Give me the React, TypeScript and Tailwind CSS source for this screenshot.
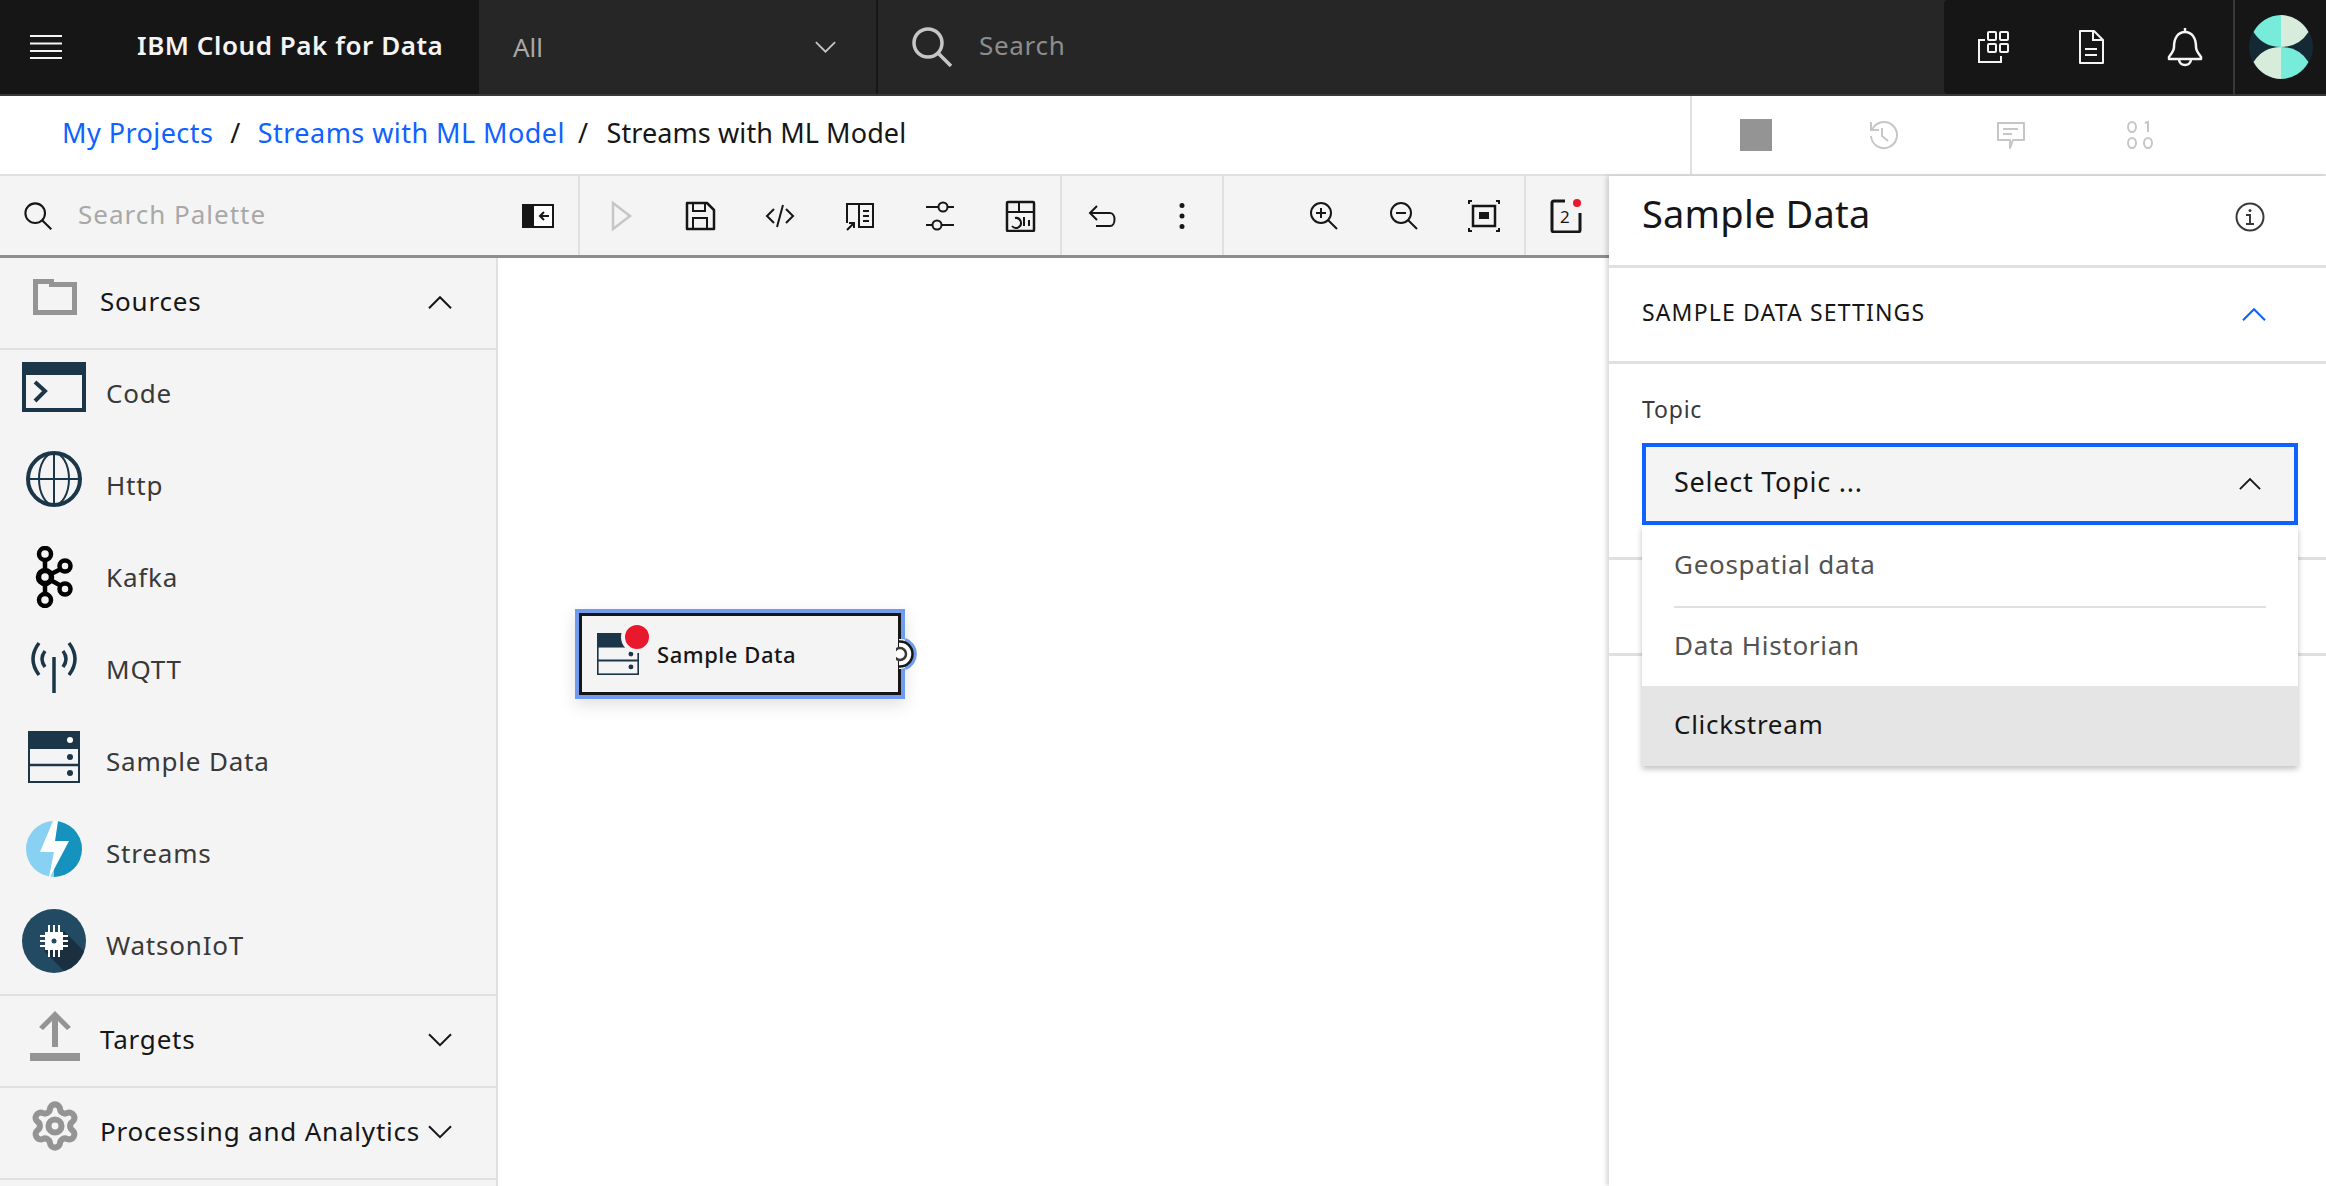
import { ReactNode } from "react";
import { Settings } from "lucide-react";

const navy = "#1c3649";

function Chevron({ up, color = "#161616", w = 24 }: { up?: boolean; color?: string; w?: number }) {
  return (
    <svg width={w} height={w * 0.6} viewBox="0 0 24 14" fill="none" stroke={color} strokeWidth="2">
      <path d={up ? "M1 13L12 2l11 11" : "M1 1l11 11L23 1"} />
    </svg>
  );
}

// header icons
function Hamburger() {
  return (
    <svg width="32" height="24" viewBox="0 0 32 24" fill="#f4f4f4">
      <rect y="0" width="32" height="2" />
      <rect y="7.5" width="32" height="2" />
      <rect y="15" width="32" height="2" />
      <rect y="22" width="32" height="2" />
    </svg>
  );
}

function Magnifier({ size, color, sw }: { size: number; color: string; sw: number }) {
  return (
    <svg width={size} height={size} viewBox="0 0 40 40" fill="none" stroke={color} strokeWidth={sw}>
      <circle cx="16" cy="16" r="14" />
      <path d="M26 26l13 13" />
    </svg>
  );
}

function AppsIcon() {
  return (
    <svg width="34" height="34" viewBox="0 0 34 34" fill="none" stroke="#f4f4f4" strokeWidth="2">
      <rect x="11" y="2" width="8" height="8" rx="1" />
      <rect x="23" y="2" width="8" height="8" rx="1" />
      <rect x="11" y="14" width="8" height="8" rx="1" />
      <rect x="23" y="14" width="8" height="8" rx="1" />
      <path d="M8 10H2v22h22v-6" />
    </svg>
  );
}

function DocIcon() {
  return (
    <svg width="26" height="34" viewBox="0 0 26 34" fill="none" stroke="#f4f4f4" strokeWidth="2">
      <path d="M2 1h14l9 9v23H2z" strokeLinejoin="round" />
      <path d="M15 1v9h10M7 19h12M7 25h12" />
    </svg>
  );
}

function BellIcon() {
  return (
    <svg width="36" height="40" viewBox="0 0 36 40" fill="none" stroke="#f4f4f4" strokeWidth="2.5">
      <path d="M18 1v4M7 20c0-9 4-15 11-15s11 6 11 15c0 4 3 7 5 10v2H2v-2c2-3 5-6 5-10z" strokeLinejoin="round" />
      <path d="M12 32c0 8 12 8 12 0" />
    </svg>
  );
}

function Avatar() {
  return (
    <svg width="64" height="64" viewBox="0 0 64 64">
      <circle cx="32" cy="32" r="32" fill="#152935" />
      <path d="M4.5 17A32 32 0 0 1 32 0v32Q14 32 4.5 17z" fill="#77ecda" />
      <path d="M59.5 17A32 32 0 0 0 32 0v32Q50 32 59.5 17z" fill="#d8ecdb" />
      <path d="M4.5 47A32 32 0 0 0 32 64V32Q14 32 4.5 47z" fill="#d8ecdb" />
      <path d="M59.5 47A32 32 0 0 1 32 64V32Q50 32 59.5 47z" fill="#77ecda" />
    </svg>
  );
}

// breadcrumb action icons
function HistoryIcon() {
  return (
    <svg width="30" height="30" viewBox="0 0 30 30" fill="none" stroke="#c6c6c6" strokeWidth="2">
      <path d="M3 2v8h8M4 10a13 13 0 1 1-1 6" />
      <path d="M14 8v8l6 5" />
    </svg>
  );
}

function CommentIcon() {
  return (
    <svg width="30" height="30" viewBox="0 0 30 30" fill="none" stroke="#c6c6c6" strokeWidth="2">
      <path d="M2 3h26v17H17l-3 8v-8H2z" strokeLinejoin="round" />
      <path d="M7 9h15M7 14h9" />
    </svg>
  );
}

function BinaryIcon() {
  return (
    <svg width="28" height="30" viewBox="0 0 28 30" fill="none" stroke="#c6c6c6" strokeWidth="2">
      <ellipse cx="6" cy="7" rx="4" ry="5" />
      <path d="M19 3l3-1v10" />
      <ellipse cx="6" cy="23" rx="4" ry="5" />
      <ellipse cx="22" cy="23" rx="4" ry="5" />
    </svg>
  );
}

// toolbar icons
function PaletteToggle() {
  return (
    <svg width="32" height="24" viewBox="0 0 32 24">
      <rect x="1" y="1" width="30" height="22" fill="#fff" stroke="#161616" strokeWidth="2" />
      <rect width="12" height="24" fill="#161616" />
      <path d="M27 12h-9M22 8l-4 4 4 4" fill="none" stroke="#161616" strokeWidth="2" />
    </svg>
  );
}

function ToolIcon({ children }: { children: ReactNode }) {
  return (
    <svg width="32" height="32" viewBox="0 0 32 32" fill="none" stroke="#161616" strokeWidth="2">
      {children}
    </svg>
  );
}

function IconButton({ children }: { children: ReactNode }) {
  return <div className="w-[80px] h-full flex items-center justify-center">{children}</div>;
}

function Divider() {
  return <div className="w-[2px] h-full bg-[#e0e0e0]" />;
}

// palette icons
function FolderIcon() {
  return (
    <svg width="44" height="36" viewBox="0 0 44 36" fill="none" stroke="#949494" strokeWidth="5">
      <path d="M2.500 33.500V2.500h16v3h23v28z" />
    </svg>
  );
}

function CodeNodeIcon() {
  return (
    <svg width="64" height="50" viewBox="0 0 64 50" fill="none">
      <rect x="2" y="2" width="60" height="46" stroke={navy} strokeWidth="4" />
      <rect width="64" height="13" fill={navy} />
      <path d="M13 20l10 9-10 10" stroke={navy} strokeWidth="4" />
    </svg>
  );
}

function GlobeIcon() {
  return (
    <svg width="56" height="56" viewBox="0 0 56 56" fill="none" stroke={navy}>
      <circle cx="28" cy="28" r="26" strokeWidth="4" />
      <ellipse cx="28" cy="28" rx="15" ry="26" strokeWidth="2" />
      <path d="M28 2v52M2 28h52" strokeWidth="2" />
    </svg>
  );
}

function KafkaIcon() {
  return (
    <svg width="40" height="62" viewBox="0 0 40 62" fill="none" stroke="#000" strokeWidth="4.500">
      <path d="M11 14v34M11 31l20-10M11 31l20 11" />
      <circle cx="11" cy="8" r="6" fill="#f4f4f4" />
      <circle cx="31" cy="20" r="5.500" fill="#f4f4f4" />
      <circle cx="31" cy="43" r="5.500" fill="#f4f4f4" />
      <circle cx="11" cy="54" r="6" fill="#f4f4f4" />
      <circle cx="11" cy="31" r="6.500" fill="#f4f4f4" strokeWidth="5.500" />
    </svg>
  );
}

function MqttIcon() {
  return (
    <svg width="48" height="52" viewBox="0 0 48 52" fill="none" stroke={navy} strokeWidth="3.500">
      <path d="M9 2Q-3 18 9 34M39 2Q51 18 39 34" />
      <path d="M15 10Q9 18 15 26M33 10Q39 18 33 26" />
      <path d="M24 16v36" />
    </svg>
  );
}

function SampleIcon({ size = 52 }: { size?: number }) {
  return (
    <svg width={size} height={size} viewBox="0 0 52 52" fill="none">
      <rect x="1" y="1" width="50" height="50" stroke={navy} strokeWidth="2" />
      <rect width="52" height="18" fill={navy} />
      <path d="M0 34h52" stroke={navy} strokeWidth="2.500" />
      <circle cx="42" cy="9" r="3" fill="#fff" />
      <circle cx="42" cy="26" r="3" fill={navy} />
      <circle cx="42" cy="42" r="3" fill={navy} />
    </svg>
  );
}

function StreamsIcon() {
  return (
    <svg width="56" height="56" viewBox="0 0 56 56">
      <path d="M28 0a28 28 0 0 1 0 56z" fill="#1592bd" />
      <path d="M28 0a28 28 0 0 0 0 56z" fill="#89d1f3" />
      <path d="M27 0h5L29 20h14L24 56h-1L28 31H14z" fill="#fff" />
    </svg>
  );
}

function WatsonIcon() {
  return (
    <svg width="64" height="64" viewBox="0 0 64 64">
      <circle cx="32" cy="32" r="32" fill="#224a62" />
      <path d="M42 22L62 42A32 32 0 0 1 42 62L22 42z" fill="#1a3040" />
      <g stroke="#fff" strokeWidth="2">
        <path d="M27 16v32M32 16v32M37 16v32M18 27h28M18 32h28M18 37h28" />
      </g>
      <rect x="23" y="23" width="18" height="18" fill="#fff" />
      <circle cx="32" cy="32" r="2.500" fill="#224a62" />
    </svg>
  );
}

function TargetsIcon() {
  return (
    <svg width="50" height="50" viewBox="0 0 50 50" fill="#949494">
      <rect y="42" width="50" height="8" />
      <path d="M25 0L41 16l-4 3-9-9v26h-6V10l-9 9-4-3z" />
    </svg>
  );
}

function PaletteItem({ icon, label, lift }: { icon: ReactNode; label: string; lift: string }) {
  return (
    <div className="h-[92px] flex items-center">
      <div className={`w-[106px] pl-[2px] flex justify-center ${lift}`}>{icon}</div>
      <span className="text-[26px] tracking-[0.8px] text-[#393939] -mt-[6px]">{label}</span>
    </div>
  );
}

function PaletteHeader({ icon, label, up, lift }: { icon: ReactNode; label: string; up?: boolean; lift: string }) {
  return (
    <div className="h-[92px] flex items-center border-b-2 border-[#e0e0e0]">
      <div className={`w-[100px] shrink-0 flex justify-center translate-x-[5px] ${lift}`}>{icon}</div>
      <span className="text-[26px] tracking-[0.8px] text-[#161616] flex-1 -mt-[4px] whitespace-nowrap">{label}</span>
      <div className="mr-[44px] -mt-[2px]">
        <Chevron up={up} />
      </div>
    </div>
  );
}

function PanelRule() {
  return <div className="h-[3px] bg-[#e0e0e0]" />;
}

export default function App() {
  return (
    <div className="w-[2326px] h-[1186px] overflow-hidden flex flex-col bg-white font-['Noto_Sans',sans-serif]">
      {/* Top bar */}
      <header className="h-[96px] shrink-0 flex bg-[#262626] border-b-2 border-[#393939]">
        <div className="w-[479px] bg-[#161616] flex items-center">
          <div className="pl-[30px] w-[137px] -mt-[1px]">
            <Hamburger />
          </div>
          <span className="text-[26px] font-semibold text-[#f4f4f4] tracking-[0.55px] -mt-[4px] whitespace-nowrap">IBM Cloud Pak for Data</span>
        </div>
        <div className="w-[399px] pl-[34px] pr-[40px] flex items-center justify-between border-r-2 border-[#161616]">
          <span className="text-[26px] text-[#a8a8a8]">All</span>
          <Chevron color="#c6c6c6" w={21} />
        </div>
        <div className="flex-1 flex items-center pl-[34px] gap-[27px]">
          <Magnifier size={40} color="#c6c6c6" sw={3.5} />
          <span className="text-[26px] tracking-[0.7px] text-[#8d8d8d] -mt-[3px]">Search</span>
        </div>
        <div className="w-[382px] bg-[#161616] rounded-l-[4px] flex items-center">
          <div className="w-[100px] flex justify-center">
            <AppsIcon />
          </div>
          <div className="w-[94px] flex justify-center">
            <DocIcon />
          </div>
          <div className="w-[95px] pr-[2px] flex justify-center">
            <BellIcon />
          </div>
          <div className="w-[2px] h-full bg-[#393939]" />
          <div className="flex-1 flex justify-center">
            <Avatar />
          </div>
        </div>
      </header>

      {/* Breadcrumb */}
      <div className="h-[80px] shrink-0 flex border-b-2 border-[#e0e0e0]">
        <div className="flex-1 flex items-center pl-[62px] text-[27px] tracking-[0.45px] -mt-[3px]">
          <span className="text-[#0f62fe]">My Projects</span>
          <span className="text-[#161616] mx-[17px]">/</span>
          <span className="text-[#0f62fe]">Streams with ML Model</span>
          <span className="text-[#161616] ml-[13px] mr-[18px]">/</span>
          <span className="text-[#161616] tracking-[0.1px]">Streams with ML Model</span>
        </div>
        <div className="w-[636px] border-l-2 border-[#e0e0e0] flex items-center pl-[48px]">
          <div className="w-[32px] h-[32px] bg-[#949494]" />
          <div className="ml-[96px]">
            <HistoryIcon />
          </div>
          <div className="ml-[98px]">
            <CommentIcon />
          </div>
          <div className="ml-[100px]">
            <BinaryIcon />
          </div>
        </div>
      </div>

      <div className="flex-1 flex min-h-0">
        <div className="flex-1 flex flex-col min-w-0">
          {/* Toolbar */}
          <div className="h-[82px] shrink-0 flex items-center bg-[#f4f4f4] border-b-[3px] border-[#8d8d8d]">
            <div className="w-[578px] h-full flex items-center pl-[24px]">
              <Magnifier size={28} color="#161616" sw={3} />
              <span className="ml-[26px] text-[26px] tracking-[1px] text-[#a8a8a8] flex-1 -mt-[3px]">Search Palette</span>
              <div className="mr-[24px]">
                <PaletteToggle />
              </div>
            </div>
            <Divider />
            <IconButton>
              <svg width="32" height="32" viewBox="0 0 32 32" fill="none" stroke="#c6c6c6" strokeWidth="2.500">
                <path d="M9 3l17 13L9 29z" />
              </svg>
            </IconButton>
            <IconButton>
              <ToolIcon>
                <path d="M3 3h20l7 7v19H3z" strokeLinejoin="round" strokeWidth="2.500" />
                <path d="M9 3v8h12V3M9 29V18h14v11" />
              </ToolIcon>
            </IconButton>
            <IconButton>
              <ToolIcon>
                <path d="M10 9l-7 7 7 7M22 9l7 7-7 7M19 5l-6 22" />
              </ToolIcon>
            </IconButton>
            <IconButton>
              <ToolIcon>
                <path d="M15 4H3v19M15 4h14v23H15zM19 11h6M19 16h6M19 21h6M3 30l7-7M5 23h5v5" />
              </ToolIcon>
            </IconButton>
            <IconButton>
              <ToolIcon>
                <path d="M2 7h12M24 7h6M2 25h6M18 25h12" />
                <circle cx="19" cy="7" r="4.500" />
                <circle cx="13" cy="25" r="4.500" />
              </ToolIcon>
            </IconButton>
            <IconButton>
              <ToolIcon>
                <rect x="3" y="2" width="27" height="29" rx="1" strokeWidth="2.500" />
                <path d="M3 12h27M15 2v10M11 18a5 5 0 1 1-3 8M20 17v9M25 20v6" />
              </ToolIcon>
            </IconButton>
            <Divider />
            <IconButton>
              <ToolIcon>
                <path d="M11 6l-7 7 7 7M4 13h20c6 0 6 13 0 13H10" />
              </ToolIcon>
            </IconButton>
            <IconButton>
              <svg width="8" height="28" viewBox="0 0 8 28" fill="#161616">
                <circle cx="4" cy="3.500" r="2.500" />
                <circle cx="4" cy="14" r="2.500" />
                <circle cx="4" cy="24.500" r="2.500" />
              </svg>
            </IconButton>
            <Divider />
            <div className="flex-1" />
            <IconButton>
              <ToolIcon>
                <circle cx="13" cy="13" r="10" />
                <path d="M20 20l9 9M13 8v10M8 13h10" />
              </ToolIcon>
            </IconButton>
            <IconButton>
              <ToolIcon>
                <circle cx="13" cy="13" r="10" />
                <path d="M20 20l9 9M8 13h10" />
              </ToolIcon>
            </IconButton>
            <IconButton>
              <ToolIcon>
                <rect x="5" y="6" width="22" height="20" strokeWidth="2.500" />
                <rect x="11" y="12" width="10" height="7" fill="#161616" stroke="none" />
                <path d="M1 4V1h3M28 1h3v3M1 28v3h3M28 31h3v-3" />
              </ToolIcon>
            </IconButton>
            <Divider />
            <div className="w-[80px] h-full flex items-center justify-center mr-[3px]">
              <svg width="32" height="34" viewBox="0 0 32 34" fill="none" stroke="#161616" strokeWidth="3">
                <path d="M15 2H4a2 2 0 0 0-2 2v27a2 2 0 0 0 2 2h24a2 2 0 0 0 2-2V14" />
                <circle cx="27" cy="4" r="4" fill="#e8192c" stroke="none" />
                <text x="10" y="24" fontSize="17" fill="#161616" stroke="none">2</text>
              </svg>
            </div>
          </div>

          <div className="flex-1 flex min-h-0">
            {/* Palette */}
            <aside className="w-[498px] shrink-0 bg-[#f4f4f4] border-r-2 border-[#e0e0e0]">
              <PaletteHeader icon={<FolderIcon />} label="Sources" up lift="-mt-[13px]" />
              <PaletteItem icon={<CodeNodeIcon />} label="Code" lift="-mt-[18px]" />
              <PaletteItem icon={<GlobeIcon />} label="Http" lift="-mt-[18px]" />
              <PaletteItem icon={<KafkaIcon />} label="Kafka" lift="-mt-[6px]" />
              <PaletteItem icon={<MqttIcon />} label="MQTT" lift="-mt-[10px]" />
              <PaletteItem icon={<SampleIcon />} label="Sample Data" lift="-mt-[14px]" />
              <PaletteItem icon={<StreamsIcon />} label="Streams" lift="-mt-[14px]" />
              <PaletteItem icon={<WatsonIcon />} label="WatsonIoT" lift="-mt-[14px]" />
              <div className="border-t-2 border-[#e0e0e0]">
                <PaletteHeader icon={<TargetsIcon />} label="Targets" lift="-mt-[10px]" />
                <PaletteHeader
                  icon={<Settings size={52} color="#949494" strokeWidth={2.8} />}
                  label="Processing and Analytics"
                  lift="-mt-[14px]"
                />
              </div>
            </aside>

            {/* Canvas */}
            <main className="flex-1 relative bg-white">
              <div className="absolute left-[77px] top-[351px] w-[330px] h-[90px] border-4 border-[#6f9cef] shadow-[0_6px_16px_rgba(0,0,0,0.12)]">
                <div className="w-full h-full border-[3px] border-[#161616] bg-[#f4f4f4] flex items-center pl-[75px]">
                  <span className="text-[22px] font-medium text-[#161616] tracking-[0.55px] mt-[1px]">Sample Data</span>
                </div>
                <div className="absolute left-[18px] top-[20px]">
                  <SampleIcon size={42} />
                </div>
                <div className="absolute left-[42px] top-[8px] w-[24px] h-[24px] rounded-full bg-[#e8192c] border-[4px] border-[#f4f4f4] box-content" />
                <svg className="absolute left-[317px] top-[21px]" width="28" height="40" viewBox="0 0 28 40" fill="none">
                  <path d="M3 5h1a15 15 0 0 1 0 30H3z" fill="#fff" />
                  <path d="M9 5.900A15 15 0 0 1 9 34.100" stroke="#6f9cef" strokeWidth="4" />
                  <path d="M3 7.500h1A12.500 12.500 0 0 1 4 32.500H3" stroke="#161616" strokeWidth="2.500" />
                  <circle cx="4" cy="20" r="6" fill="#fff" stroke="#393939" strokeWidth="2.500" />
                </svg>
              </div>
            </main>
          </div>
        </div>

        {/* Properties panel */}
        <section className="w-[717px] shrink-0 relative z-10 bg-white shadow-[-3px_0_4px_rgba(0,0,0,0.14)]">
          <div className="h-[89px] flex items-center justify-between pl-[33px] pr-[61px]">
            <h2 className="text-[38px] text-[#161616] tracking-[0.2px] -mt-[14px]">Sample Data</h2>
            <svg className="-mt-[8px]" width="30" height="30" viewBox="0 0 30 30" fill="none" stroke="#393939" strokeWidth="2">
              <circle cx="15" cy="15" r="13.500" />
              <path d="M11 13h4v8M11 22h8" />
              <circle cx="15" cy="8.500" r="1.500" fill="#393939" stroke="none" />
            </svg>
          </div>
          <PanelRule />
          <div className="h-[93px] flex items-center justify-between pl-[33px] pr-[60px]">
            <span className="text-[23px] text-[#161616] tracking-[1.15px] -mt-[4px]">SAMPLE DATA SETTINGS</span>
            <Chevron up color="#0f62fe" />
          </div>
          <PanelRule />
          <div className="h-[193px] pl-[33px] pr-[28px] pt-[29px]">
            <div className="text-[23px] tracking-[0.8px] text-[#393939] leading-[32px]">Topic</div>
            <div className="mt-[18px] h-[82px] border-[4px] border-[#0f62fe] bg-[#f4f4f4] flex items-center justify-between pl-[28px] pr-[33px]">
              <span className="text-[27px] tracking-[0.75px] text-[#161616] -mt-[4px]">Select Topic ...</span>
              <Chevron up w={22} />
            </div>
          </div>
          <PanelRule />
          <div className="h-[93px]" />
          <PanelRule />

          <div className="absolute left-[33px] top-[350px] w-[656px] bg-white shadow-[0_3px_6px_rgba(0,0,0,0.25)] text-[26px] tracking-[0.7px]">
            <div className="h-[80px] flex items-center pl-[32px] text-[#525252]">
              <span className="-mt-[3px]">Geospatial data</span>
            </div>
            <div className="h-[80px] mx-[32px] border-t-2 border-[#e0e0e0] flex items-center text-[#525252]">
              <span className="-mt-[3px]">Data Historian</span>
            </div>
            <div className="h-[80px] bg-[#e5e5e5] flex items-center pl-[32px] text-[#161616]">
              <span className="-mt-[3px]">Clickstream</span>
            </div>
          </div>
        </section>
      </div>
    </div>
  );
}
